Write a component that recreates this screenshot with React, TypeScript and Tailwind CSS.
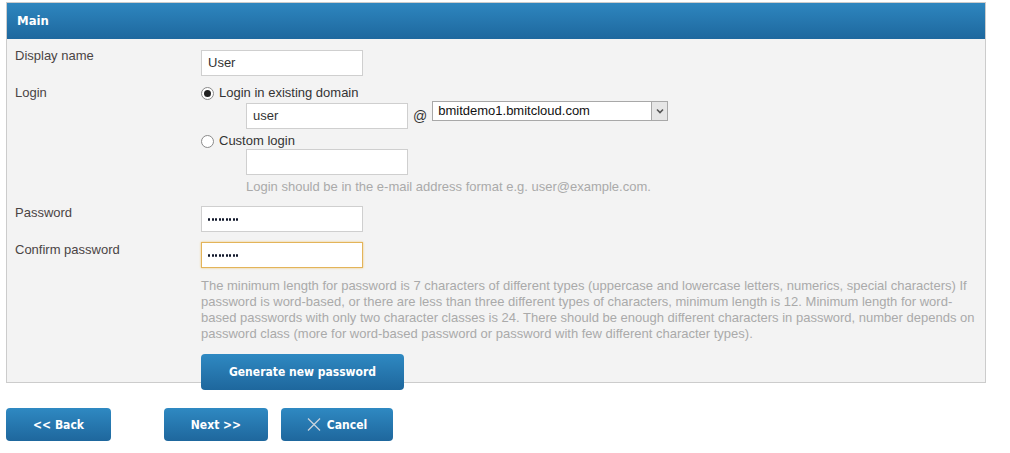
import React, { useState } from 'react';

const btnFont = { fontFamily: '"DejaVu Sans Condensed", "DejaVu Sans", sans-serif' };

const BlueButton: React.FC<{ className?: string; children: React.ReactNode }> = ({ className = '', children }) => (
  <button
    style={btnFont}
    className={`flex items-center justify-center rounded-[4px] bg-gradient-to-b from-[#2f89c2] to-[#1e679d] text-[12px] font-bold text-white ${className}`}
  >
    {children}
  </button>
);

const Radio: React.FC<{ checked?: boolean }> = ({ checked }) => (
  <span className="flex h-[13px] w-[13px] items-center justify-center rounded-full border border-[#8a8a8a] bg-white">
    {checked && <span className="h-[7px] w-[7px] rounded-full bg-[#222]" />}
  </span>
);

const TextInput: React.FC<{ value?: string; password?: boolean; focused?: boolean }> = ({ value = '', password, focused }) => (
  <div
    className={`flex h-[26px] w-[162px] items-center bg-white px-[6px] text-[13px] text-[#333] ${
      focused ? 'border border-[#e3b459] shadow-[0_0_2px_#f0c878]' : 'border border-[#cfcfcf]'
    }`}
  >
    {password ? (
      <span className="flex gap-[1.5px]">
        {Array.from({ length: 9 }).map((_, i) => (
          <span key={i} className="h-[3px] w-[2px] rounded-full bg-[#10172a]" />
        ))}
      </span>
    ) : (
      value
    )}
  </div>
);

const App: React.FC = () => {
  const [mode] = useState<'domain' | 'custom'>('domain');

  return (
    <div className="h-[453px] w-[1010px] bg-white pt-[2px] pl-[6px]" style={{ fontFamily: '"Liberation Sans", Arial, sans-serif' }}>
      <section className="w-[980px] border border-[#cccccc] bg-[#f3f3f3]">
        <div
          style={btnFont}
          className="flex h-[36px] items-center bg-gradient-to-b from-[#2e86bf] to-[#1e689e] pl-[10px] text-[13px] font-bold text-white"
        >
          Main
        </div>

        <div className="pt-[10px] pl-[8px] text-[13px] text-[#4a4444]">
          {/* display name */}
          <div className="flex">
            <div className="w-[186px] leading-[14px]">Display name</div>
            <div className="pt-[1px]">
              <TextInput value="User" />
            </div>
          </div>

          {/* login */}
          <div className="mt-[9px] flex">
            <div className="w-[186px] leading-[16px]">Login</div>
            <div className="text-[#333]">
              <label className="flex h-[16px] items-center gap-[5px]">
                <Radio checked={mode === 'domain'} />
                <span>Login in existing domain</span>
              </label>
              <div className="mt-[2px] flex items-center pl-[45px]">
                <TextInput value="user" />
                <span className="ml-[5px] text-[14px] text-[#333]">@</span>
                <div className="ml-[5px] -mt-[11px] flex h-[20px] w-[236px] items-stretch border border-[#a8a8a8] bg-white">
                  <span className="flex flex-1 items-center pl-[5px] text-[13px] text-[#111]">bmitdemo1.bmitcloud.com</span>
                  <span className="flex w-[16px] items-center justify-center border-l border-[#a8a8a8] bg-[#e6e6e6]">
                    <svg width="8" height="6" viewBox="0 0 8 6">
                      <path d="M1 1.5 L4 4.5 L7 1.5" fill="none" stroke="#555" strokeWidth="1.6" />
                    </svg>
                  </span>
                </div>
              </div>
              <label className="mt-[4px] flex h-[16px] items-center gap-[5px]">
                <Radio checked={false} />
                <span>Custom login</span>
              </label>
              <div className="pl-[45px]">
                <TextInput />
              </div>
              <div className="pl-[45px] pt-[4px] leading-[16px] text-[#aaaaaa]">
                Login should be in the e-mail address format e.g. user@example.com.
              </div>
            </div>
          </div>

          {/* password */}
          <div className="mt-[11px] flex">
            <div className="w-[186px] leading-[14px]">Password</div>
            <TextInput password />
          </div>

          <div className="mt-[10px] flex">
            <div className="w-[186px] pt-[1px] leading-[14px]">Confirm password</div>
            <TextInput password focused />
          </div>

          <div className="ml-[186px]">
            <p className="mt-[10px] w-[782px] leading-[16px] text-[#aaaaaa]">
              The minimum length for password is 7 characters of different types (uppercase and lowercase letters, numerics, special characters) If password is word-based, or there are less than three different types of characters, minimum length is 12. Minimum length for word-based passwords with only two character classes is 24. There should be enough different characters in password, number depends on password class (more for word-based password or password with few different character types).
            </p>
            <BlueButton className="relative mt-[12px] -mb-[8px] h-[36px] w-[203px]">Generate new password</BlueButton>
          </div>
        </div>
      </section>

      <div className="mt-[25px] flex">
        <BlueButton className="h-[33px] w-[105px]">&lt;&lt; Back</BlueButton>
        <BlueButton className="ml-[53px] h-[33px] w-[104px]">Next &gt;&gt;</BlueButton>
        <BlueButton className="ml-[13px] h-[33px] w-[112px] gap-[6px]">
          <svg width="14" height="13" viewBox="0 0 14 13">
            <path d="M1 0.5 L13 12.5 M13 0.5 L1 12.5" stroke="#c9d3dc" strokeWidth="1.3" />
          </svg>
          <span>Cancel</span>
        </BlueButton>
      </div>
    </div>
  );
};

export default App;
